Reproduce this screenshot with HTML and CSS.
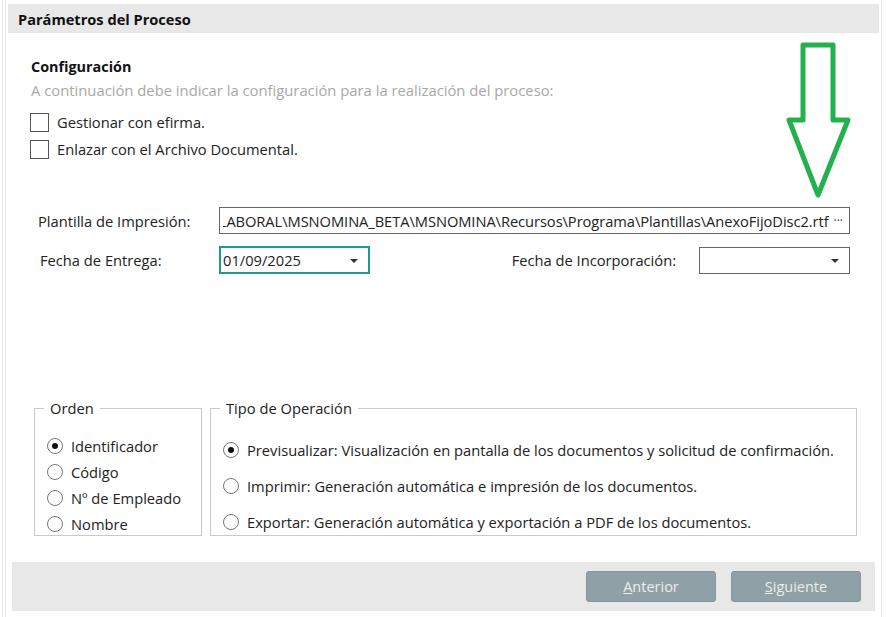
FILE: index.html
```html
<!DOCTYPE html>
<html lang="es">
<head>
  <meta charset="utf-8" />
  <title>Parámetros del Proceso</title>
  <link rel="stylesheet" href="styles.css">
</head>
<body>
  <div class="frame">
    <div class="header">Parámetros del Proceso</div>

    <div class="content">
      <div class="title">Configuración</div>
      <div class="subtitle">A continuación debe indicar la configuración para la realización del proceso:</div>

      <div class="check"><span class="box"></span>Gestionar con efirma.</div>
      <div class="check"><span class="box"></span>Enlazar con el Archivo Documental.</div>

      <div class="row plantilla">
        <label class="lbl">Plantilla de Impresión:</label>
        <div class="input path">
          <div class="path-clip"><span>LABORAL\MSNOMINA_BETA\MSNOMINA\Recursos\Programa\Plantillas\AnexoFijoDisc2.rtf</span></div>
          <span class="dots">···</span>
        </div>
      </div>

      <div class="row fechas">
        <label class="lbl lbl2">Fecha de Entrega:</label>
        <div class="input date focus">01/09/2025<span class="caret"></span></div>
        <label class="lbl3">Fecha de Incorporación:</label>
        <div class="input date empty"><span class="caret"></span></div>
      </div>

      <div class="groups">
        <fieldset class="orden">
          <legend>Orden</legend>
          <div class="radio"><span class="dot on"></span>Identificador</div>
          <div class="radio"><span class="dot"></span>Código</div>
          <div class="radio"><span class="dot"></span>Nº de Empleado</div>
          <div class="radio"><span class="dot"></span>Nombre</div>
        </fieldset>
        <fieldset class="tipo">
          <legend>Tipo de Operación</legend>
          <div class="radio"><span class="dot on"></span>Previsualizar: Visualización en pantalla de los documentos y solicitud de confirmación.</div>
          <div class="radio"><span class="dot"></span>Imprimir: Generación automática e impresión de los documentos.</div>
          <div class="radio"><span class="dot"></span>Exportar: Generación automática y exportación a PDF de los documentos.</div>
        </fieldset>
      </div>

      <!-- flecha verde de la captura -->
      <svg class="arrow" width="66" height="158" viewBox="0 0 66 158">
        <path d="M17 3 H47 V78 H62 L32 153 L3 78 H17 Z" fill="none" stroke="#22b14c" stroke-width="5" stroke-linejoin="round" />
      </svg>
    </div>

    <div class="footer">
      <button class="btn"><u>A</u>nterior</button>
      <button class="btn"><u>S</u>iguiente</button>
    </div>
  </div>
</body>
</html>
```

FILE: styles.css
```css
body {
  margin: 0;
  padding: 0;
  background-color: white;
  font-family: "Open Sans", "Noto Sans", sans-serif;
  font-size: 14.7px;
  color: #222;
}

.frame {
  margin-left: 2px;
  width: 880px;
  height: 617px;
  box-sizing: border-box;
  border-left: 1px solid #e4e4e4;
  border-right: 1px solid #e4e4e4;
  padding: 4px 2px 0 5px;
  box-shadow: inset 2px 0 0 white, inset 3px 0 0 #ececec;
}

.header {
  height: 29px;
  line-height: 30px;
  background-color: #e8e8e8;
  font-weight: bold;
  font-size: 14.6px;
  padding-left: 10px;
  color: #111;
}

.content {
  position: relative;
  height: 529px;
}

.title {
  padding-top: 24px;
  padding-left: 23px;
  font-weight: bold;
  font-size: 14.4px;
  line-height: 20px;
  color: #111;
}

.subtitle {
  margin-top: 3px;
  padding-left: 23px;
  line-height: 20px;
  color: #a8a8a8;
  font-size: 14.8px;
}

.check {
  display: flex;
  align-items: center;
  margin-top: 7px;
  padding-left: 22px;
  height: 20px;
}

.subtitle + .check {
  margin-top: 12px;
}

.box {
  width: 17px;
  height: 17px;
  border: 1px solid #555;
  margin-right: 8px;
  background: white;
}

.row {
  display: flex;
  align-items: center;
  padding-right: 29px;
}

.plantilla {
  margin-top: 48px;
}

.fechas {
  margin-top: 12px;
}

.lbl {
  width: 181px;
  padding-left: 30px;
}

.lbl2 {
  padding-left: 32px;
  width: 179px;
}

.lbl3 {
  margin-left: auto;
  margin-right: 23px;
}

.input {
  box-sizing: border-box;
  border: 1px solid #666;
  background: white;
  display: flex;
  align-items: center;
  position: relative;
}

.path {
  flex: 1;
  min-width: 0;
  height: 27px;
  padding-left: 3px;
  overflow: hidden;
  white-space: nowrap;
}

.path-clip {
  flex: 1;
  min-width: 0;
  display: flex;
  justify-content: flex-end;
  overflow: hidden;
  letter-spacing: -0.07px;
}

.dots {
  padding: 0 6px 0 5px;
  font-size: 12px;
  color: #333;
}

.date {
  width: 151px;
  height: 28px;
  padding-left: 3px;
}

.focus {
  border: 2px solid #1f9a91;
  padding-left: 2px;
}

.empty {
  height: 27px;
}

.caret {
  position: absolute;
  right: 10px;
  top: 11px;
  width: 0;
  height: 0;
  border-left: 4px solid transparent;
  border-right: 4px solid transparent;
  border-top: 4px solid #333;
}

.groups {
  display: flex;
  gap: 8px;
  margin-top: 125px;
  padding-left: 26px;
}

fieldset {
  margin: 0;
  border: 1px solid #c9c9c9;
  padding: 0;
  height: 137px;
  box-sizing: border-box;
}

legend {
  padding: 0 6px;
  margin-left: -3px;
  line-height: 18px;
}

.orden {
  width: 168px;
  padding: 16px 0 0 12px;
}

.tipo {
  width: 647px;
  padding: 15px 0 0 12px;
}

.radio {
  display: flex;
  align-items: center;
  height: 26px;
  white-space: nowrap;
}

.tipo .radio {
  height: 36px;
}

.dot {
  width: 16px;
  height: 16px;
  border: 1px solid #777;
  border-radius: 50%;
  margin-right: 8px;
  box-sizing: border-box;
  display: flex;
  align-items: center;
  justify-content: center;
  flex-shrink: 0;
}

.dot.on::after {
  content: "";
  width: 6px;
  height: 6px;
  border-radius: 50%;
  background: #111;
}

.arrow {
  position: absolute;
  left: 778px;
  top: 9px;
}

.footer {
  margin: 0 4px;
  height: 49px;
  background-color: #e8e8e8;
  display: flex;
  justify-content: flex-end;
  align-items: center;
  gap: 15px;
  padding-right: 14px;
}

.btn {
  width: 130px;
  height: 31px;
  background-color: #8fa1a6;
  border: 1px solid #84969b;
  border-radius: 3px;
  color: #e9edef;
  font-family: "Open Sans", "Noto Sans", sans-serif;
  font-size: 14.5px;
}
```
